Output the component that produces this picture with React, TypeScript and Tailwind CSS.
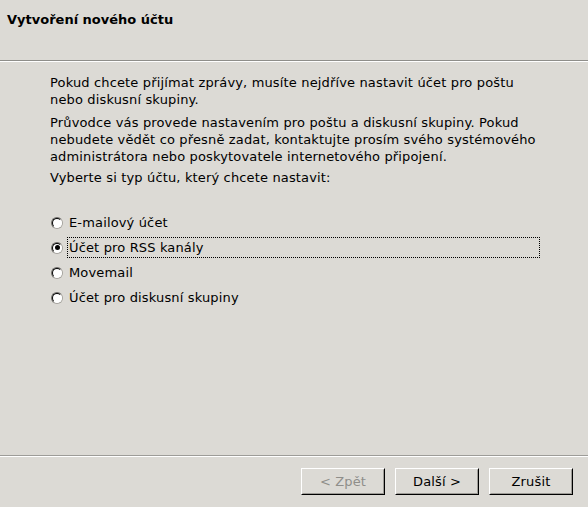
import React from "react";

function Radio({ checked }: { checked?: boolean }) {
  return (
    <div className="w-[12px] h-[12px] shrink-0 rounded-full border border-t-[#6f6e6a] border-l-[#6f6e6a] border-r-[#a5a39e] border-b-[#a5a39e]">
      <div className="w-full h-full rounded-full bg-white border border-t-black border-l-black border-r-white border-b-white flex items-center justify-center">
        {checked && <div className="w-[5px] h-[5px] rounded-full bg-black" />}
      </div>
    </div>
  );
}

function Btn({ children, disabled }: { children: React.ReactNode; disabled?: boolean }) {
  return (
    <div className="w-[84px] h-[27px] border border-t-white border-l-white border-r-black border-b-black">
      <div
        className={`w-full h-full flex items-center justify-center border border-t-[#dcdad5] border-l-[#dcdad5] border-r-[#9d9b96] border-b-[#9d9b96] ${disabled ? "text-[#8f8e8a]" : "text-black"}`}
      >
        {children}
      </div>
    </div>
  );
}

export default function App() {
  const options = [
    { label: "E-mailový účet" },
    { label: "Účet pro RSS kanály", checked: true },
    { label: "Movemail" },
    { label: "Účet pro diskusní skupiny" },
  ];
  return (
    <div
      className="w-[588px] h-[507px] bg-[#dcdad5] flex flex-col text-black text-[13px] tracking-[0.15px]"
      style={{ fontFamily: '"DejaVu Sans", Verdana, sans-serif' }}
    >
      <div className="h-[60px] px-[7px] pt-[12px] font-bold leading-[16px] tracking-normal">Vytvoření nového účtu</div>
      <div className="h-px bg-[#8f8e8a]" />
      <div className="h-px bg-[#ffffff]" />
      <div className="flex-1 pl-[50px] pr-[40px] pt-[12px] leading-[17px]">
        <p>
          Pokud chcete přijímat zprávy, musíte nejdříve nastavit účet pro poštu
          <br />
          nebo diskusní skupiny.
        </p>
        <p className="mt-[6px]">
          Průvodce vás provede nastavením pro poštu a diskusní skupiny. Pokud
          <br />
          nebudete vědět co přesně zadat, kontaktujte prosím svého systémového
          <br />
          administrátora nebo poskytovatele internetového připojení.
        </p>
        <p className="mt-[4px]">Vyberte si typ účtu, který chcete nastavit:</p>
        <div className="mt-[24px] flex flex-col">
          {options.map((o) => (
            <div key={o.label} className="h-[25px] flex items-center pl-px">
              <Radio checked={o.checked} />
              <div
                className={`ml-[4px] h-[21px] flex items-center pl-px ${o.checked ? "w-[473px] border border-dotted border-black" : "border border-transparent"}`}
              >
                {o.label}
              </div>
            </div>
          ))}
        </div>
      </div>
      <div className="h-px bg-[#9d9c98]" />
      <div className="h-px bg-[#ffffff]" />
      <div className="h-[50px] flex justify-end items-start pt-[11px] pr-[15px] gap-[10px]">
        <Btn disabled>&lt; Zpět</Btn>
        <Btn>Další &gt;</Btn>
        <Btn>Zrušit</Btn>
      </div>
    </div>
  );
}
